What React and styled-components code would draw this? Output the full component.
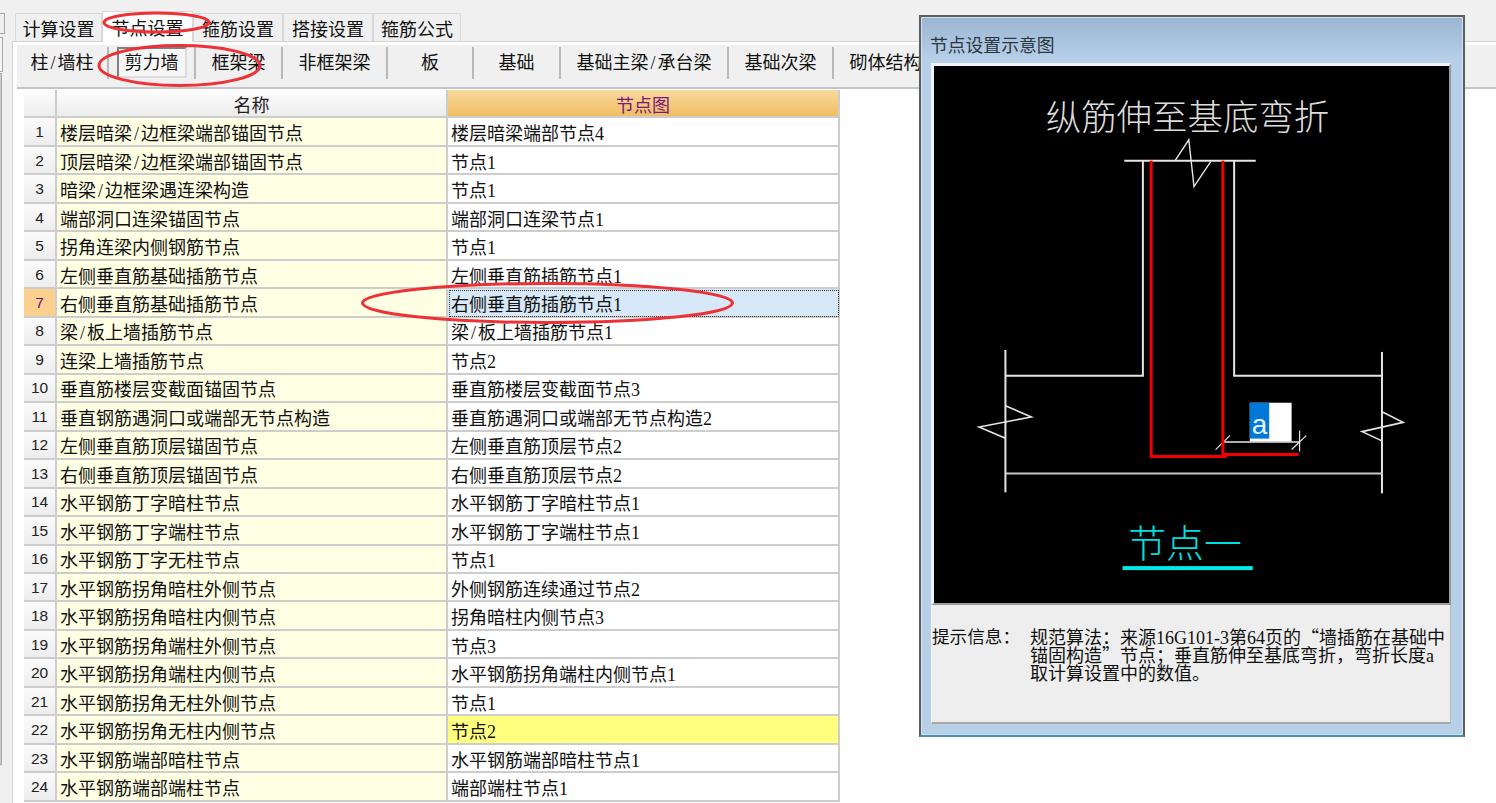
import React from "react";
import styled, { createGlobalStyle } from "styled-components";

const rows = [
  ["楼层暗梁/边框梁端部锚固节点", "楼层暗梁端部节点4"],
  ["顶层暗梁/边框梁端部锚固节点", "节点1"],
  ["暗梁/边框梁遇连梁构造", "节点1"],
  ["端部洞口连梁锚固节点", "端部洞口连梁节点1"],
  ["拐角连梁内侧钢筋节点", "节点1"],
  ["左侧垂直筋基础插筋节点", "左侧垂直筋插筋节点1"],
  ["右侧垂直筋基础插筋节点", "右侧垂直筋插筋节点1"],
  ["梁/板上墙插筋节点", "梁/板上墙插筋节点1"],
  ["连梁上墙插筋节点", "节点2"],
  ["垂直筋楼层变截面锚固节点", "垂直筋楼层变截面节点3"],
  ["垂直钢筋遇洞口或端部无节点构造", "垂直筋遇洞口或端部无节点构造2"],
  ["左侧垂直筋顶层锚固节点", "左侧垂直筋顶层节点2"],
  ["右侧垂直筋顶层锚固节点", "右侧垂直筋顶层节点2"],
  ["水平钢筋丁字暗柱节点", "水平钢筋丁字暗柱节点1"],
  ["水平钢筋丁字端柱节点", "水平钢筋丁字端柱节点1"],
  ["水平钢筋丁字无柱节点", "节点1"],
  ["水平钢筋拐角暗柱外侧节点", "外侧钢筋连续通过节点2"],
  ["水平钢筋拐角暗柱内侧节点", "拐角暗柱内侧节点3"],
  ["水平钢筋拐角端柱外侧节点", "节点3"],
  ["水平钢筋拐角端柱内侧节点", "水平钢筋拐角端柱内侧节点1"],
  ["水平钢筋拐角无柱外侧节点", "节点1"],
  ["水平钢筋拐角无柱内侧节点", "节点2"],
  ["水平钢筋端部暗柱节点", "水平钢筋端部暗柱节点1"],
  ["水平钢筋端部端柱节点", "端部端柱节点1"],
];

const tabs = [
  { label: "计算设置", width: 87 },
  { label: "节点设置", width: 91, active: true },
  { label: "箍筋设置", width: 90 },
  { label: "搭接设置", width: 90 },
  { label: "箍筋公式", width: 88 },
];

const tools = [
  { label: "柱/墙柱", width: 92 },
  { label: "剪力墙", width: 87, pressed: true },
  { label: "框架梁", width: 87 },
  { label: "非框架梁", width: 105 },
  { label: "板", width: 86 },
  { label: "基础", width: 87 },
  { label: "基础主梁/承台梁", width: 168 },
  { label: "基础次梁", width: 105 },
  { label: "砌体结构", width: 105 },
];

const GlobalStyle = createGlobalStyle`
  html, body {
    margin: 0;
    background: #fff;
    overflow: hidden;
  }
  * {
    box-sizing: border-box;
  }
`;

const Page = styled.div`
  position: relative;
  display: flex;
  width: 1496px;
  height: 803px;
  overflow: hidden;
  background: #f0f0f0;
  color: #111;
  font-family: "Liberation Serif", "Noto Sans CJK SC", sans-serif;
`;

const LeftRail = styled.div`
  flex: 0 0 12px;
  padding-top: 13px;
`;

const RailStub = styled.div`
  width: ${(p) => p.$width}px;
  height: ${(p) => p.$height}px;
  margin-bottom: ${(p) => p.$gap}px;
  background: ${(p) => p.$bg};
  border: 1px solid #a8a8a8;
  border-left: none;
`;

const Main = styled.div`
  flex: 1;
  min-width: 0;
  display: flex;
  flex-direction: column;
`;

const TabStrip = styled.div`
  height: 42px;
  display: flex;
  align-items: flex-end;
  padding-left: 3px;
  border-bottom: 1px solid #d4d4d4;
`;

const Tab = styled.div`
  width: ${(p) => p.$width}px;
  height: ${(p) => (p.$active ? 31 : 28)}px;
  margin-bottom: ${(p) => (p.$active ? -1 : 0)}px;
  position: relative;
  display: flex;
  align-items: center;
  justify-content: center;
  font-size: 18px;
  white-space: nowrap;
  background: ${(p) => (p.$active ? "#fff" : "#f0f0f0")};
  border: 1px solid #d9d9d9;
  border-bottom: none;
`;

const Panel = styled.div`
  flex: 1;
  min-height: 0;
  background: #fff;
  border-left: 1px solid #d4d4d4;
  padding: 3px 0 0 4px;
`;

const Toolbar = styled.div`
  height: 44px;
  padding-top: 2px;
  display: flex;
  background: #f0f0f0;
  border-bottom: 2px solid #c4c4c4;
`;

const ToolButton = styled.div`
  flex: 0 0 ${(p) => p.$width}px;
  height: 32px;
  display: flex;
  justify-content: center;
  font-size: 18px;
  white-space: nowrap;
  border-right: 2px solid #b9b9b9;
`;

const ToolLabel = styled.span`
  height: 31px;
  display: flex;
  align-items: center;
  padding: ${(p) => (p.$pressed ? "0 6px 3px" : "0 0 3px")};
  background: ${(p) => (p.$pressed ? "#f6f6f6" : "transparent")};
  border-style: solid;
  border-width: ${(p) => (p.$pressed ? "2px" : "0")};
  border-color: ${(p) =>
    p.$pressed ? "#808080 #dcdcdc #dcdcdc #808080" : "transparent"};
`;

const Table = styled.div`
  display: grid;
  grid-template-columns: 33px 391px 392px;
  grid-auto-rows: 28.48px;
  width: 816px;
  margin: 1px 0 0 7px;
  font-size: 18px;
`;

const Cell = styled.div`
  display: flex;
  align-items: center;
  padding: 1px 0 0 3px;
  white-space: nowrap;
  overflow: hidden;
  border-right: 2px solid #cdcdcd;
  border-bottom: 2px solid #cdcdcd;
`;

const CornerCell = styled(Cell)`
  background: linear-gradient(#fdfdfd, #ededed);
`;

const HeadCell = styled(Cell)`
  justify-content: center;
  padding-left: 0;
  color: ${(p) => (p.$accent ? "#78187c" : "#222")};
  background: ${(p) =>
    p.$accent
      ? "linear-gradient(#f9d99f, #f0bd62)"
      : "linear-gradient(#fdfdfd, #ececec)"};
`;

const RowNumber = styled(Cell)`
  justify-content: center;
  padding-left: 0;
  font-family: "Liberation Sans", sans-serif;
  font-size: 15.5px;
  color: ${(p) => (p.$current ? "#5a1a78" : "#222")};
  background: ${(p) =>
    p.$current ? "#fbcf8d" : "linear-gradient(#fbfbfb, #ededed)"};
`;

const NameCell = styled(Cell)`
  background: #ffffe3;
`;

const ValueCell = styled(Cell)`
  background: ${(p) =>
    p.$selected ? "#d7e8f8" : p.$changed ? "#ffff80" : "#fff"};
  outline: ${(p) => (p.$selected ? "1px dotted #333" : "none")};
  outline-offset: -2px;
`;

const Slash = styled.span`
  display: inline-block;
  width: 0.5em;
  text-align: center;
`;

// the slash is half an em wide in the original font
const Label = ({ text }) => {
  const [before, after] = text.split("/");
  if (after === undefined) return <span>{text}</span>;
  return (
    <span>
      {before}
      <Slash>/</Slash>
      {after}
    </span>
  );
};

const Window = styled.div`
  position: absolute;
  left: 919px;
  top: 15px;
  width: 546px;
  height: 722px;
  display: flex;
  flex-direction: column;
  padding: 0 12px 11px 10px;
  background: linear-gradient(#9ab5d2 0, #b7cfe8 42px, #b8cfe8 100%);
  border: 2px solid #5e5e5e;
  border-bottom-color: #4a8fb8;
  box-shadow: inset 0 0 0 1px #cfe0f0;
`;

const WindowTitle = styled.div`
  height: 46px;
  padding-top: 15px;
  margin-left: -1px;
  font-family: "Noto Sans CJK SC", sans-serif;
  font-size: 17.8px;
  line-height: 24px;
  color: #2c3640;
  white-space: nowrap;
`;

const Canvas = styled.div`
  height: 542px;
  background: #000;
  border-style: solid;
  border-width: 3px 2px 2px 3px;
  border-color: #eef4fa #9a9a9a #9a9a9a #eef4fa;
`;

const Drawing = styled.svg`
  display: block;
  width: 100%;
  height: 100%;
`;

const InfoPane = styled.div`
  flex: 1;
  display: flex;
  padding: 22px 0 0 0;
  background: #eeeeee;
  border-left: 1px solid #f8f8f8;
  border-bottom: 2px solid #a8a8a8;
  border-right: 1px solid #b8b8b8;
  font-family: "Noto Sans CJK SC", sans-serif;
  font-size: 18px;
  line-height: 18px;
`;

const InfoLabel = styled.div`
  flex: 0 0 98px;
  font-size: 17.6px;
  white-space: nowrap;
`;

const InfoText = styled.div`
  white-space: nowrap;
`;

const InfoLine = styled.div`
  height: 18px;
`;

const Num = styled.span`
  font-family: "Liberation Serif", serif;
`;

const Annotations = styled.svg`
  position: absolute;
  left: 0;
  top: 0;
  width: 1496px;
  height: 803px;
  pointer-events: none;
`;

const Mark = styled.ellipse`
  fill: none;
  stroke: #ee3136;
  stroke-width: 3;
`;

const Line = ({ d, color = "#e6e6e6", width = 2 }) => (
  <path d={d} fill="none" stroke={color} strokeWidth={width} />
);

const NodeDrawing = () => (
  <Drawing viewBox="933 66 517 537">
    <text
      x="1187.5"
      y="129"
      fill="#dcdcdc"
      fontSize="35.6"
      textAnchor="middle"
      fontFamily='"Noto Sans CJK SC", sans-serif'
      fontWeight="300"
    >
      纵筋伸至基底弯折
    </text>
    <Line d="M1124 160H1256" />
    <Line d="M1175 160L1188.8 139L1194 186L1210.8 161" width={1.4} />
    <Line d="M1142.7 160V376H1005" />
    <Line d="M1234.3 160V376H1383" />
    <Line d="M1004.7 350V493" />
    <Line d="M1382.7 352V494" />
    <Line d="M1005 474H1383" color="#c8c8c8" />
    <Line
      d="M1004.7 406L1030.7 417.3L978.3 427.3L1004.7 438.7"
      width={1.6}
    />
    <Line d="M1382.7 412L1404 422.7L1362.7 432L1382.7 441.3" width={1.6} />
    <rect x="1250" y="403" width="42" height="39" fill="#fff" />
    <rect x="1250" y="403" width="19.5" height="36" fill="#0078d7" />
    <text
      x="1259.7"
      y="434"
      fill="#e8f2fc"
      fontSize="28"
      textAnchor="middle"
      fontFamily='"Liberation Sans", sans-serif'
    >
      a
    </text>
    <Line d="M1223 442.3H1300" width={1.5} />
    <Line d="M1215.7 450L1230 436" width={1.2} />
    <Line d="M1292 450L1306.7 436" width={1.2} />
    <Line d="M1300 431V452" width={1.2} />
    <Line d="M1151 160V457H1227" color="#f00000" width={3} />
    <Line d="M1223 160V455H1299" color="#f00000" width={3} />
    <text
      x="1185"
      y="558"
      fill="#00e0e0"
      fontSize="38"
      textAnchor="middle"
      fontFamily='"Noto Sans CJK SC", sans-serif'
      fontWeight="300"
    >
      节点一
    </text>
    <rect x="1122.3" y="567" width="130.7" height="4" fill="#00e8e8" />
  </Drawing>
);

const App = () => (
  <Page>
    <GlobalStyle />
    <LeftRail>
      <RailStub $width={5} $height={21} $gap={3} $bg="#f0f0f0" />
      <RailStub $width={3} $height={35} $gap={1} $bg="#f4f4f4" />
      <RailStub $width={2} $height={692} $gap={0} $bg="#c6ccd4" />
    </LeftRail>
    <Main>
      <TabStrip>
        {tabs.map((tab) => (
          <Tab key={tab.label} $width={tab.width} $active={tab.active}>
            {tab.label}
          </Tab>
        ))}
      </TabStrip>
      <Panel>
        <Toolbar>
          {tools.map((tool) => (
            <ToolButton key={tool.label} $width={tool.width}>
              <ToolLabel $pressed={tool.pressed}>
                <Label text={tool.label} />
              </ToolLabel>
            </ToolButton>
          ))}
        </Toolbar>
        <Table>
          <CornerCell />
          <HeadCell>名称</HeadCell>
          <HeadCell $accent>节点图</HeadCell>
          {rows.map(([name, value], i) => (
            <React.Fragment key={name}>
              <RowNumber $current={i === 6}>{i + 1}</RowNumber>
              <NameCell>
                <Label text={name} />
              </NameCell>
              <ValueCell $selected={i === 6} $changed={i === 21}>
                <Label text={value} />
              </ValueCell>
            </React.Fragment>
          ))}
        </Table>
      </Panel>
    </Main>
    <Window>
      <WindowTitle>节点设置示意图</WindowTitle>
      <Canvas>
        <NodeDrawing />
      </Canvas>
      <InfoPane>
        <InfoLabel>提示信息：</InfoLabel>
        <InfoText>
          <InfoLine>
            规范算法：来源<Num>16G101-3</Num>第<Num>64</Num>页的“墙插筋在基础中
          </InfoLine>
          <InfoLine>
            锚固构造”节点；垂直筋伸至基底弯折，弯折长度<Num>a</Num>
          </InfoLine>
          <InfoLine>取计算设置中的数值。</InfoLine>
        </InfoText>
      </InfoPane>
    </Window>
    <Annotations viewBox="0 0 1496 803">
      <Mark cx="156.5" cy="22.5" rx="52.5" ry="9.5" />
      <Mark cx="179.5" cy="65.5" rx="80.5" ry="20" />
      <Mark cx="547.5" cy="303" rx="185" ry="19.5" />
    </Annotations>
  </Page>
);

export default App;
